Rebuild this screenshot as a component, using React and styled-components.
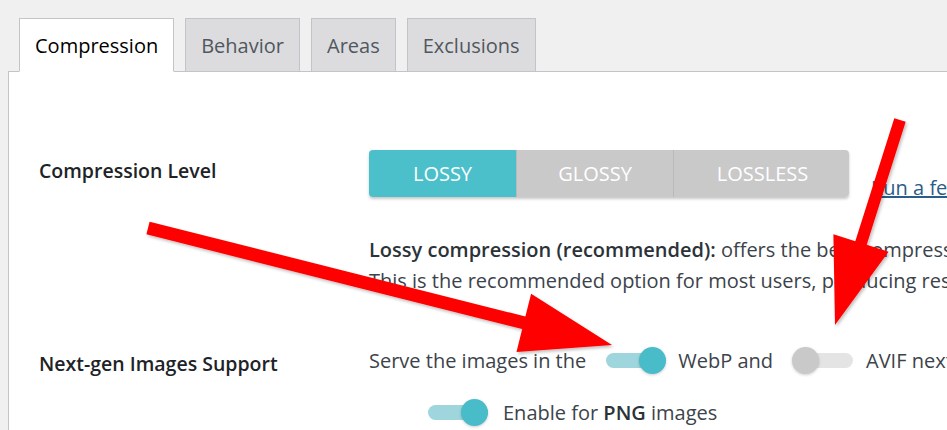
import React from "react";
import styled, { createGlobalStyle } from "styled-components";

const GlobalStyle = createGlobalStyle`
  html, body {
    margin: 0;
    padding: 0;
    background: #f0f0f1;
    overflow: hidden;
    font-family: "Open Sans", "Noto Sans", sans-serif;
  }
`;

const Page = styled.div`
  position: relative;
  width: 947px;
  height: 430px;
  padding: 18px 0 0 8px;
  box-sizing: border-box;
  overflow: hidden;
`;

const TabNav = styled.div`
  display: flex;
  gap: 11px;
  padding-left: 11px;
  position: relative;
  z-index: 1;
`;

const Tab = styled.div`
  height: 54px;
  box-sizing: border-box;
  padding: 0 15px;
  display: flex;
  align-items: center;
  font-size: 20px;
  border: 1px solid #c3c4c7;
  border-bottom: ${(p) => (p.$active ? "1px solid #fff" : "1px solid #c3c4c7")};
  background: ${(p) => (p.$active ? "#fff" : "#dcdcde")};
  color: ${(p) => (p.$active ? "#000" : "#50575e")};
  margin-bottom: -1px;
`;

const Panel = styled.div`
  background: #fff;
  border: 1px solid #c3c4c7;
  border-right: none;
  height: 400px;
  padding: 78px 0 0 30px;
  box-sizing: border-box;
`;

const Form = styled.div`
  display: grid;
  grid-template-columns: 330px 1fr;
  row-gap: 50px;
  white-space: nowrap;
`;

const Label = styled.div`
  font-size: 19.5px;
  font-weight: 600;
  color: #1d2327;
  line-height: 28px;
  padding-top: ${(p) => p.$top || 0}px;
`;

const Field = styled.div`
  display: flex;
  flex-direction: column;
`;

const LevelRow = styled.div`
  display: flex;
  align-items: flex-end;
  gap: 22px;
`;

const Segmented = styled.div`
  display: flex;
  width: 480px;
  height: 47px;
  border-radius: 4px;
  overflow: hidden;
  box-shadow: 0 2px 3px rgba(0, 0, 0, 0.22);
`;

const Segment = styled.div`
  flex: 0 0 ${(p) => p.$w}px;
  display: flex;
  align-items: center;
  justify-content: center;
  font-size: 20px;
  color: #fff;
  background: ${(p) => (p.$active ? "#4bbfca" : "#c9c9c9")};
  border-left: ${(p) => (p.$first ? "none" : "1px solid #b9b9b9")};
`;

const TestLink = styled.a`
  font-size: 20px;
  color: #2a5d8a;
  text-decoration: underline;
  line-height: 26px;
  margin-bottom: -4px;
`;

const Description = styled.div`
  margin-top: 37px;
  font-size: 20px;
  line-height: 31px;
  color: #3c434a;

  b {
    font-weight: 600;
    color: #2c3338;
  }
`;

const OptionRow = styled.div`
  display: flex;
  align-items: center;
  height: 28px;
  font-size: 20px;
  color: #3c434a;
  padding-left: ${(p) => p.$indent || 0}px;
  margin-top: ${(p) => p.$mt || 0}px;

  b {
    font-weight: 600;
    color: #2c3338;
  }
`;

const Switch = styled.span`
  position: relative;
  flex: 0 0 60px;
  height: 15px;
  border-radius: 8px;
  margin: 0 ${(p) => p.$mr}px 0 ${(p) => p.$ml}px;
  background: ${(p) => (p.$on ? "#9fd5dc" : "#e4e4e4")};

  &::after {
    content: "";
    position: absolute;
    top: -6px;
    left: ${(p) => (p.$on ? "33px" : "-1px")};
    width: 27px;
    height: 27px;
    border-radius: 50%;
    background: ${(p) => (p.$on ? "#48bcc8" : "#c9c9c9")};
    box-shadow: 0 1px 3px rgba(0, 0, 0, 0.2);
  }
`;

const Overlay = styled.svg`
  position: absolute;
  left: 0;
  top: 0;
  pointer-events: none;
  z-index: 5;
`;

export default function App() {
  return (
    <>
      <GlobalStyle />
      <Page>
        <TabNav>
          <Tab $active>Compression</Tab>
          <Tab>Behavior</Tab>
          <Tab>Areas</Tab>
          <Tab>Exclusions</Tab>
        </TabNav>
        <Panel>
          <Form>
            <Label $top={7}>Compression Level</Label>
            <Field>
              <LevelRow>
                <Segmented>
                  <Segment $w={147} $first $active>LOSSY</Segment>
                  <Segment $w={156}>GLOSSY</Segment>
                  <Segment $w={177}>LOSSLESS</Segment>
                </Segmented>
                <TestLink href="#">Run a few tests</TestLink>
              </LevelRow>
              <Description>
                <div>
                  <b>Lossy compression (recommended):</b> offers the best compression and performance.
                </div>
                <div>
                  This is the recommended option for most users, producing results that look the same as the original.
                </div>
              </Description>
            </Field>

            <Label $top={4}>Next-gen Images Support</Label>
            <Field>
              <OptionRow>
                Serve the images in the
                <Switch $on $ml={20} $mr={12} />
                WebP and
                <Switch $ml={20} $mr={13} />
                AVIF next-gen formats
              </OptionRow>
              <OptionRow $indent={59} $mt={24}>
                <Switch $on $ml={0} $mr={15} />
                Enable for&nbsp;<b>PNG</b>&nbsp;images
              </OptionRow>
            </Field>
          </Form>
        </Panel>

        <Overlay width="947" height="430" viewBox="0 0 947 430">
          <defs>
            <filter id="arrowShadow" x="-10%" y="-10%" width="130%" height="130%">
              <feDropShadow dx="1.5" dy="2" stdDeviation="1.5" floodColor="#000" floodOpacity="0.25" />
            </filter>
          </defs>
          <polygon
            fill="#ff0000"
            filter="url(#arrowShadow)"
            points="149.6,221.7 525.4,316.5 531.1,293.7 612,345 516.5,351.9 522.2,329.1 146.4,234.3"
          />
          <polygon
            fill="#ff0000"
            filter="url(#arrowShadow)"
            points="894.3,118.2 905.7,121.8 866.7,244.8 888.6,251.8 835,325 833.4,234.2 855.3,241.2"
          />
        </Overlay>
      </Page>
    </>
  );
}
